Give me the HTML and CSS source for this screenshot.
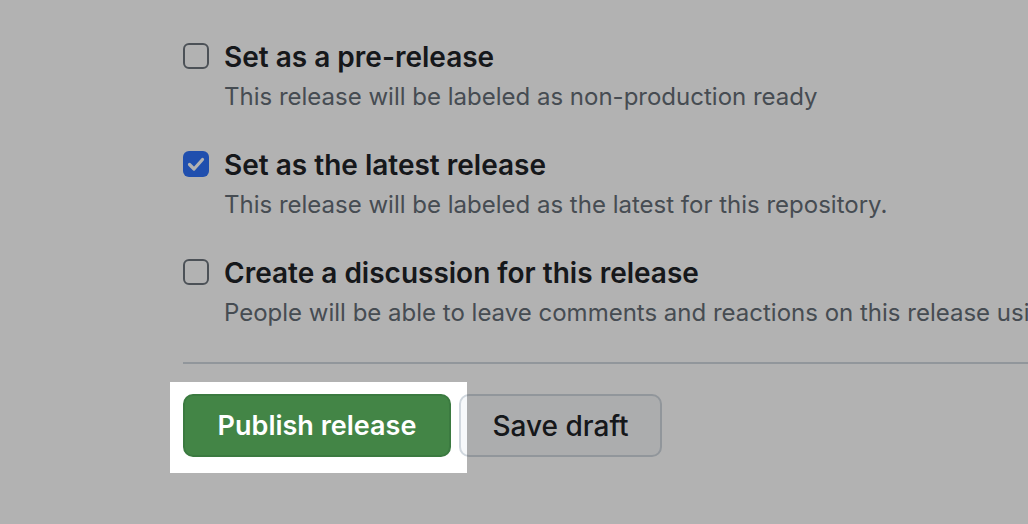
FILE: index.html
```html
<!DOCTYPE html>
<html lang="en">
<head>
<meta charset="utf-8">
<title>Publish release</title>
<link rel="stylesheet" href="styles.css">
</head>
<body>
<main class="page">
  <section class="options">
    <div class="option">
      <span class="checkbox"></span>
      <div class="option-text">
        <div class="option-title">Set as a pre-release</div>
        <div class="option-desc">This release will be labeled as non-production ready</div>
      </div>
    </div>
    <div class="option">
      <span class="checkbox checked">
        <svg viewBox="0 0 26 26" width="26" height="26"><path d="M6.5 13.5 L11 18 L19.5 8.5" fill="none" stroke="#ffffff" stroke-width="3.2" stroke-linecap="round" stroke-linejoin="round"/></svg>
      </span>
      <div class="option-text">
        <div class="option-title">Set as the latest release</div>
        <div class="option-desc">This release will be labeled as the latest for this repository.</div>
      </div>
    </div>
    <div class="option">
      <span class="checkbox"></span>
      <div class="option-text">
        <div class="option-title">Create a discussion for this release</div>
        <div class="option-desc">People will be able to leave comments and reactions on this release using Discussions.</div>
      </div>
    </div>
  </section>
  <hr class="divider">
  <div class="actions">
    <button class="btn btn-primary">Publish release</button>
    <button class="btn btn-default">Save draft</button>
    <div class="spotlight"></div>
  </div>
</main>
</body>
</html>
```

FILE: styles.css
```css
html, body {
  margin: 0;
  padding: 0;
  background: #ffffff;
  overflow: hidden;
}

.page {
  font-family: Inter, "Liberation Sans", sans-serif;
  padding: 39px 0 0 183px;
  width: 1028px;
  height: 524px;
  box-sizing: border-box;
  overflow: hidden;
}

.options {
  display: flex;
  flex-direction: column;
  gap: 34px;
}

.option {
  display: flex;
  gap: 15px;
  align-items: flex-start;
}

.checkbox {
  flex: none;
  width: 26px;
  height: 26px;
  margin-top: 4px;
  box-sizing: border-box;
  border: 2px solid #6e757d;
  border-radius: 6px;
  background: #ffffff;
  display: flex;
}

.checkbox.checked {
  border: none;
  background: #2e72fa;
}

.option-text {
  min-width: 0;
}

.option-title {
  font-size: 28px;
  line-height: 36px;
  font-weight: 600;
  color: #1f2328;
  white-space: nowrap;
}

.option-desc {
  margin-top: 6px;
  font-size: 24px;
  line-height: 32px;
  color: #656d76;
  white-space: nowrap;
}

.divider {
  margin: 33px 0 0 0;
  border: none;
  height: 2px;
  background: #d0d7de;
}

.actions {
  position: relative;
  display: flex;
  gap: 8px;
  margin-top: 30px;
}

.btn {
  height: 63px;
  box-sizing: border-box;
  border-radius: 10px;
  font-family: Inter, "Liberation Sans", sans-serif;
  font-size: 28px;
  font-weight: 600;
  padding: 0;
}

.btn-primary {
  width: 268px;
  font-size: 27px;
  background: #438546;
  border: 2px solid #3b7a40;
  color: #ffffff;
}

.btn-default {
  width: 203px;
  background: #f6f8fa;
  border: 2px solid #d0d7de;
  color: #1f2328;
  font-weight: 500;
}

.spotlight {
  position: absolute;
  left: -13px;
  top: -12px;
  width: 297px;
  height: 91px;
  box-shadow: 0 0 0 3000px rgba(0, 0, 0, 0.3);
  pointer-events: none;
}
```
